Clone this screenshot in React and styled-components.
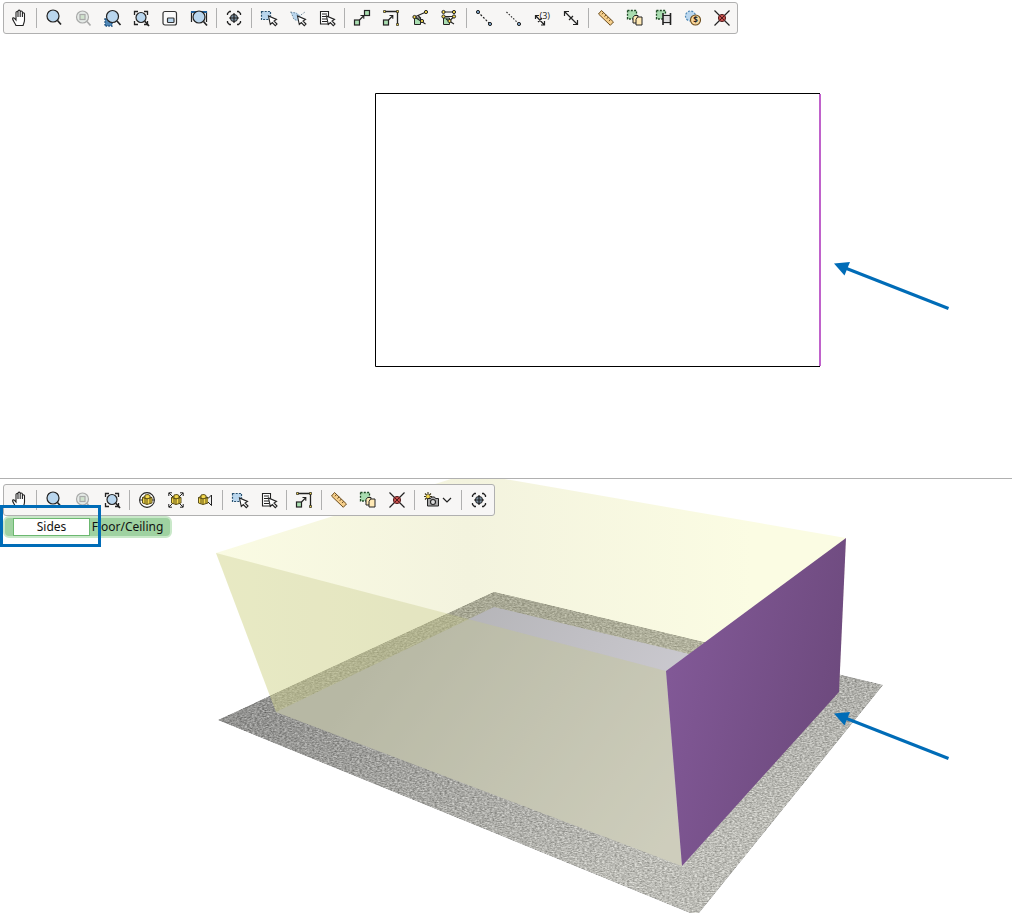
import React from 'react'
import styled, { createGlobalStyle } from 'styled-components'

const ink = '#222'
const blue = '#b9d6ee'
const green = '#a9ddb0'
const yellow = '#f5d94e'

const Lens = ({ x = 9, y = 8, r = 6 }) => (
  <>
    <circle cx={x} cy={y} r={r} fill={blue} stroke={ink} strokeWidth="1.2" />
    <path d={`M${x + r * 0.75} ${y + r * 0.75}L${x + 8} ${y + 8.5}`} stroke={ink} strokeWidth="1.7" />
  </>
)

const Cursor = () => (
  <path d="M9.5 8l1.8 8.500 2-2 3 3.200 1.700-1.600-3-3.100 2.500-1.600z" fill="#fff" stroke={ink} strokeWidth="1.1" />
)

const Square = ({ x, y, s = 5 }) => (
  <rect x={x} y={y} width={s} height={s} fill={green} stroke={ink} strokeWidth="1.2" />
)

const Dot = ({ x, y, fill = yellow }) => (
  <circle cx={x} cy={y} r="1.6" fill={fill} stroke={ink} strokeWidth="1" />
)

const Corners = () => (
  <path d="M3.5 7V3.5H7M13 3.5h3.5V7M16.5 13v3.5H13M7 16.5H3.5V13" stroke={ink} strokeWidth="1.3" />
)

const Cube = ({ x = 10, y = 10 }) => (
  <g transform={`translate(${x} ${y})`} stroke="#4d4210" strokeWidth="0.9">
    <path d="M-4.500-2.500L-2-3.500V-5L1-5.500 3-4.500v1.500l2 .5V3L0 4.500-4.500 3z" fill={yellow} />
    <path d="M-4.500-2.500L0-1.200 5-2.500M0-1.200v5.700M-2-3.500v7M3-3v6.500" />
  </g>
)

const icons = {
  hand: (
    <path
      d="M6 17.5C5.400 15.600 3 12.600 2.600 11c-.2-1.200 1.100-1.600 1.900-.6L6 12V4.600c0-1.400 2-1.400 2 0V3.200c0-1.500 2.200-1.500 2.200 0v.9c0-1.400 2.200-1.400 2.200 0v1.600c0-1.300 2.100-1.300 2.100 0V12c0 2.400-1 3.600-1.400 5.500zM8 4.600V9M10.200 4v5M12.400 5v4"
      transform="translate(1 0)"
      fill="#fff"
      stroke={ink}
      strokeWidth="1.1"
    />
  ),
  zoom: <Lens />,
  zoomOff: (
    <g stroke="#a9aaa9">
      <circle cx="9.5" cy="9" r="6" fill="#e4e9e6" strokeWidth="1.2" />
      <path d="M14 13.5l3.5 4" strokeWidth="1.6" />
      <rect x="7" y="6.5" width="5" height="5" fill="#cfe2cc" strokeWidth="1.2" />
    </g>
  ),
  zoomSelection: (
    <>
      <path d="M3 11h7v7H3z" fill="#4f86b5" stroke="#1c4f7d" strokeWidth="1.4" strokeDasharray="1.5 1.2" />
      <Lens x={10.5} y={8.5} />
    </>
  ),
  zoomExtents: (
    <>
      <Corners />
      <Lens x={10} y={9.5} r={5} />
    </>
  ),
  zoomWindow: (
    <>
      <rect x="3" y="3.5" width="13.5" height="13.5" rx="2" fill="#fafafa" stroke="#333" strokeWidth="1.2" />
      <rect x="7.5" y="10" width="6.5" height="4.5" rx="0.8" fill={blue} stroke="#333" strokeWidth="1.2" />
    </>
  ),
  zoomView: (
    <>
      <path d="M2.5 14V4h15v10" stroke={ink} strokeWidth="1.2" />
      <path d="M2 4h16" stroke="#1f5f9a" strokeWidth="2" />
      <Lens x={10} y={9} />
    </>
  ),
  target: (
    <>
      <path d="M3.5 7V5.5l2-2H7M13 3.5h1.5l2 2V7M16.5 13v1.5l-2 2H13M7 16.5H5.5l-2-2V13" stroke={ink} strokeWidth="1.3" />
      <circle cx="10" cy="10" r="3.6" fill="#7e93a5" stroke={ink} strokeWidth="1" />
      <path d="M10 5v10M5 10h10" stroke={ink} strokeWidth="1.2" />
    </>
  ),
  selectRect: (
    <>
      <rect x="2.5" y="3.5" width="9" height="8" fill={blue} stroke="#28506f" strokeWidth="1.2" strokeDasharray="2 1.2" />
      <Cursor />
    </>
  ),
  selectPolygon: (
    <>
      <path d="M2.5 4l6 .5L13 8l-2 5-4.500-1z" fill={blue} />
      <path d="M2.500 4l5 1 4 3 5.500-4M3 4l3 7.500 4 1" stroke="#6f8799" strokeWidth="1" strokeDasharray="1.5 1.5" />
      <Cursor />
    </>
  ),
  list: (
    <>
      <path d="M3.500 3.500h8V16h-8z" fill="#fff" stroke={ink} strokeWidth="1.1" />
      <path d="M5 6h5M5 8.500h4M5 11h5M5 13.500h5" stroke={ink} strokeWidth="1.1" />
      <Cursor />
    </>
  ),
  move: (
    <>
      <Square x={2.5} y={12} />
      <Square x={12.5} y={2.5} />
      <path d="M7.5 12l4-4M8.5 7.5h3.3v3.3" stroke={ink} strokeWidth="1.1" />
    </>
  ),
  align: (
    <>
      <path d="M3.5 3.5h13v13" stroke={ink} strokeWidth="1.3" />
      <Square x={2.5} y={12} />
      <path d="M7.5 12l4-4M8.5 7.5h3.3v3.3" stroke={ink} strokeWidth="1.1" />
      <path d="M2.5 2.5h2v2h-2zM15.5 2.5h2v2h-2zM15.5 15.5h2v2h-2z" fill={yellow} stroke={ink} strokeWidth="0.7" />
    </>
  ),
  slope: (
    <>
      <path d="M4.5 10h6v6.5h-6z" fill={green} stroke={ink} strokeWidth="1" />
      <path d="M4.5 9L16 4M4.500 9l11 7M8 7.5l3 3" stroke={ink} strokeWidth="1.1" />
      <Dot x={16} y={4} />
      <Dot x={4.5} y={9} />
      <Dot x={12} y={13} />
    </>
  ),
  links: (
    <>
      <path d="M4.5 10h6v6.5h-6z" fill={green} stroke={ink} strokeWidth="1" />
      <path d="M4.5 4H15M4.5 8.5H15M7 11l8 5M10.500 13l4.500-4.500" stroke={ink} strokeWidth="1.1" />
      <Dot x={4.5} y={4} />
      <Dot x={15} y={4} />
      <Dot x={4.5} y={8.5} />
      <Dot x={15} y={8.5} />
      <Dot x={10.5} y={13} />
    </>
  ),
  nodeLine: (
    <>
      <path d="M4 4l12 12" stroke={ink} strokeWidth="1.2" strokeDasharray="2 1.6" />
      <Dot x={4} y={4} fill="#7fa8cf" />
      <Dot x={16} y={16} fill="#7fa8cf" />
    </>
  ),
  endLine: (
    <>
      <path d="M3.5 4L15 15" stroke={ink} strokeWidth="1.1" strokeDasharray="1.5 1.6" />
      <Dot x={16} y={16} fill="#7fa8cf" />
    </>
  ),
  measureCount: (
    <>
      <path d="M3.500 7.500l8.500 9M3.500 11V7.500H7M12.500 13v4H9M6 14l4-4" stroke={ink} strokeWidth="1.2" />
      <text x="7.500" y="10.500" fontSize="9" fill={ink}>(3)</text>
    </>
  ),
  measure: (
    <path d="M4 4l12 12M3.5 8V3.5H8M16.5 12v4.5H12M8 12l4-4" stroke={ink} strokeWidth="1.2" />
  ),
  ruler: (
    <>
      <path d="M5.5 2.5l12 11.5-3.2 3.3L2.5 6z" fill="#f6cf8c" stroke="#6b4c1d" strokeWidth="1" />
      <path d="M7.5 4.5L6 6.3M10 6.8L8.5 8.6M12.3 9l-1.5 1.8M14.6 11.3l-1.5 1.8" stroke="#6b4c1d" strokeWidth="1" />
    </>
  ),
  copy: (
    <>
      <rect x="2.5" y="2.5" width="9" height="8.5" fill={green} stroke="#1e4a25" strokeWidth="1.3" strokeDasharray="2 1.3" />
      <path d="M8 9.5l1.5-2H13V15H8z" fill="#ffe9b5" stroke={ink} />
      <path d="M11 11.5L12.5 9H17v8h-6z" fill="#ffe9b5" stroke={ink} />
    </>
  ),
  frame: (
    <>
      <rect x="2.5" y="2.5" width="9" height="8.5" fill={green} stroke="#1e4a25" strokeWidth="1.3" strokeDasharray="2 1.3" />
      <path d="M9 6h7v10H9z" fill="#ddd" />
      <path d="M9 5v12M16.500 5v12" stroke={ink} strokeWidth="1.6" />
      <path d="M9 7.500h8M9 14.500h8" stroke={ink} strokeWidth="1.1" />
    </>
  ),
  cost: (
    <>
      <circle cx="7.5" cy="8" r="5" fill={blue} stroke="#4d87b5" strokeWidth="1.2" strokeDasharray="2 1.4" />
      <circle cx="12.5" cy="12" r="5" fill="#f8d79b" stroke="#6b4c1d" strokeWidth="1.1" />
      <text x="12.5" y="15" textAnchor="middle" fontSize="8" fontWeight="700" fill={ink}>$</text>
    </>
  ),
  remove: (
    <>
      <path d="M2.5 2.5l15 15M17.5 2.5l-15 15" stroke={ink} strokeWidth="1.2" />
      <circle cx="10" cy="10" r="3.6" fill="#c9504d" stroke="#4f1c1c" strokeWidth="1" />
      <path d="M8 8l4 4M12 8l-4 4" stroke="#4f1c1c" />
    </>
  ),
  orbit: (
    <>
      <circle cx="10" cy="10" r="7.4" fill="#fff" stroke={ink} strokeWidth="1.1" />
      <path d="M3 10h14" stroke={ink} />
      <Cube />
    </>
  ),
  cubeExtents: (
    <>
      <path d="M3 3l14 14M17 3L3 17M2.8 6V2.8H6M14 2.8h3.2V6M17.2 14v3.2H14M6 17.2H2.8V14" stroke={ink} strokeWidth="1" />
      <Cube />
    </>
  ),
  cubeView: (
    <>
      <Cube x={8} />
      <path d="M13 8.5L16.5 5v10.5L13 12" fill="#eee" stroke={ink} strokeWidth="1" />
    </>
  ),
  camera: (
    <>
      <path d="M6 2v9M2 6.500h8M3 3.500l6 6M9 3.500l-6 6" stroke="#3d3512" strokeWidth="1.1" />
      <circle cx="6" cy="6.500" r="1.8" fill={yellow} />
      <path d="M5.500 8.500h3l1-1.500h3l1 1.500h3v7.500h-11z" fill="#aaa" stroke={ink} strokeWidth="1" />
      <circle cx="11" cy="12" r="2.5" fill="#ddd" stroke={ink} strokeWidth="1.1" />
    </>
  ),
}

const planTools = [
  ['hand'],
  ['zoom', 'zoomOff', 'zoomSelection', 'zoomExtents', 'zoomWindow', 'zoomView'],
  ['target'],
  ['selectRect', 'selectPolygon', 'list'],
  ['move', 'align', 'slope', 'links'],
  ['nodeLine', 'endLine', 'measureCount', 'measure'],
  ['ruler', 'copy', 'frame', 'cost', 'remove'],
]

const sceneTools = [
  ['hand'],
  ['zoom', 'zoomOff', 'zoomExtents'],
  ['orbit', 'cubeExtents', 'cubeView'],
  ['selectRect', 'list'],
  ['align'],
  ['ruler', 'copy', 'remove'],
  ['camera'],
  ['target'],
]

function Tools({ label, groups }) {
  return (
    <Toolbar role="toolbar" aria-label={label}>
      {groups.map((group, i) => (
        <Group key={i}>
          {group.map((name) => (
            <Tool key={name} type="button" aria-label={name} $wide={name === 'camera'} disabled={name === 'zoomOff'}>
              <svg width="20" height="20" viewBox="0 0 20 20" fill="none">{icons[name]}</svg>
              {name === 'camera' && (
                <svg width="10" height="10" viewBox="0 0 10 10" fill="none">
                  <path d="M1 3l4 4 4-4" stroke={ink} strokeWidth="1.2" />
                </svg>
              )}
            </Tool>
          ))}
        </Group>
      ))}
    </Toolbar>
  )
}

const Arrow = ({ x, y }) => (
  <g transform={`translate(${x} ${y})`}>
    <path d="M10 4l104.5 41" stroke="#006cb7" strokeWidth="3" />
    <path d="M0 0l16-1.5L10.500 12z" fill="#006cb7" />
  </g>
)

function PlanDrawing() {
  return (
    <Drawing viewBox="0 0 1012 478" fill="none">
      <path d="M820 93.5H375.5V366.5H820" stroke="#000" />
      <path d="M820 94V366" stroke="#c062cb" strokeWidth="2" />
      <Arrow x={834} y={263.5} />
    </Drawing>
  )
}

function RoomDrawing() {
  return (
    <Drawing viewBox="0 479 1012 434" fill="none">
      <defs>
        <linearGradient id="walls" gradientUnits="userSpaceOnUse" x1="216" y1="553" x2="846" y2="538">
          <stop offset="0" stopColor="#fafbe3" />
          <stop offset="0.4" stopColor="#f3f3de" />
          <stop offset="0.85" stopColor="#fbfce3" />
        </linearGradient>
        <linearGradient id="ground" gradientUnits="userSpaceOnUse" x1="500" y1="620" x2="600" y2="880">
          <stop offset="0" stopColor="#929290" />
          <stop offset="1" stopColor="#bcbcb6" />
        </linearGradient>
        <linearGradient id="floor" gradientUnits="userSpaceOnUse" x1="380" y1="640" x2="660" y2="850">
          <stop offset="0" stopColor="#b0b0b3" />
          <stop offset="1" stopColor="#d3d1d8" />
        </linearGradient>
        <linearGradient id="side" gradientUnits="userSpaceOnUse" x1="666" y1="690" x2="846" y2="730">
          <stop offset="0" stopColor="#815896" />
          <stop offset="1" stopColor="#6c497c" />
        </linearGradient>
        <filter id="gravel" x="0" y="0" width="1" height="1" colorInterpolationFilters="sRGB">
          <feTurbulence type="fractalNoise" baseFrequency="0.4 0.8" numOctaves="2" seed="4" />
          <feColorMatrix values="1 0 0 0 0  1 0 0 0 0  1 0 0 0 0  0 0 0 0 1" result="noise" />
          <feComposite in="SourceGraphic" in2="noise" operator="arithmetic" k2="1" k3="0.5" k4="-0.25" result="grain" />
          <feComposite in="grain" in2="SourceGraphic" operator="in" />
        </filter>
        <clipPath id="room">
          <path d="M216 553L470 473 846 538 839 692 682 866 276 712z" />
        </clipPath>
      </defs>
      <path d="M216 553L470 473 846 538 839 692 682 866 276 712z" fill="url(#walls)" />
      <path d="M494 592L883 685 699 913 695 915 218 720z" fill="url(#ground)" filter="url(#gravel)" />
      <path d="M494 592L883 685 699 913 695 915 218 720z" fill="#dcdca0" fillOpacity="0.3" clipPath="url(#room)" />
      <path d="M494 607L839 690 682 866 276 712z" fill="url(#floor)" />
      <path d="M216 553L666 671 682 866 276 712z" fill="#c3c687" fillOpacity="0.34" />
      <path d="M666 671L846 538 839 692 682 866z" fill="url(#side)" />
      <Arrow x={834} y={713.5} />
    </Drawing>
  )
}

function App() {
  return (
    <Page>
      <GlobalStyle />
      <View>
        <PlanDrawing />
        <Overlay $top={2}>
          <Tools label="Plan tools" groups={planTools} />
        </Overlay>
      </View>
      <View $divided>
        <RoomDrawing />
        <Overlay $top={5}>
          <Tools label="3D tools" groups={sceneTools} />
          <Tabs role="tablist">
            <Tab type="button" role="tab" aria-selected="true" $active>Sides</Tab>
            <Tab type="button" role="tab" aria-selected="false">Floor/Ceiling</Tab>
          </Tabs>
        </Overlay>
        <Highlight />
      </View>
    </Page>
  )
}

export default App

const GlobalStyle = createGlobalStyle`
  * {
    box-sizing: border-box;
  }

  body {
    margin: 0;
    background: #fff;
    font-family: "Noto Sans", "Open Sans", sans-serif;
  }
`;

const Page = styled.main`
  display: flex;
  flex-direction: column;
`;

const View = styled.section`
  position: relative;
  display: grid;
  overflow: hidden;
  border-top: ${({ $divided }) => ($divided ? '1px solid #b0b0b0' : 'none')};

  > * {
    grid-area: 1 / 1;
  }
`;

const Drawing = styled.svg`
  display: block;
  width: 100%;
`;

const Overlay = styled.div`
  display: flex;
  flex-direction: column;
  place-self: start;
  align-items: flex-start;
  margin: ${({ $top }) => $top}px 3px 0;
`;

const Toolbar = styled.div`
  display: flex;
  height: 32px;
  padding-left: 1px;
  border: 1px solid #b0b0b0;
  border-radius: 3px;
  background: #f7f6f5;
`;

const Group = styled.div`
  display: flex;
  align-items: center;

  & + &::before {
    content: '';
    width: 1px;
    height: 20px;
    margin: 0 3px 0 2px;
    background: #b0b0b0;
  }
`;

const Tool = styled.button`
  display: flex;
  align-items: center;
  width: ${({ $wide }) => ($wide ? 41 : 29)}px;
  height: 28px;
  padding: 0 0 0 4px;
  border: none;
  background: none;
  font-family: "Open Sans", sans-serif;
`;

const Tabs = styled.div`
  display: flex;
  height: 22px;
  padding: 0 5px 0 8px;
  border: 2px solid #c9e8c9;
  border-radius: 6px;
  background: #9fd2a1;
`;

const Tab = styled.button`
  width: ${({ $active }) => ($active ? 77 : 75)}px;
  height: 18px;
  padding: 0;
  border: 1px solid ${({ $active }) => ($active ? '#6cb870' : 'transparent')};
  background: ${({ $active }) => ($active ? '#fff' : 'none')};
  color: #111;
  font-family: inherit;
  font-size: 12px;
  line-height: 16px;
  white-space: nowrap;
`;

const Highlight = styled.div`
  position: absolute;
  top: 26px;
  left: 0;
  width: 101px;
  height: 42px;
  border: 3px solid #006cb7;
`;
